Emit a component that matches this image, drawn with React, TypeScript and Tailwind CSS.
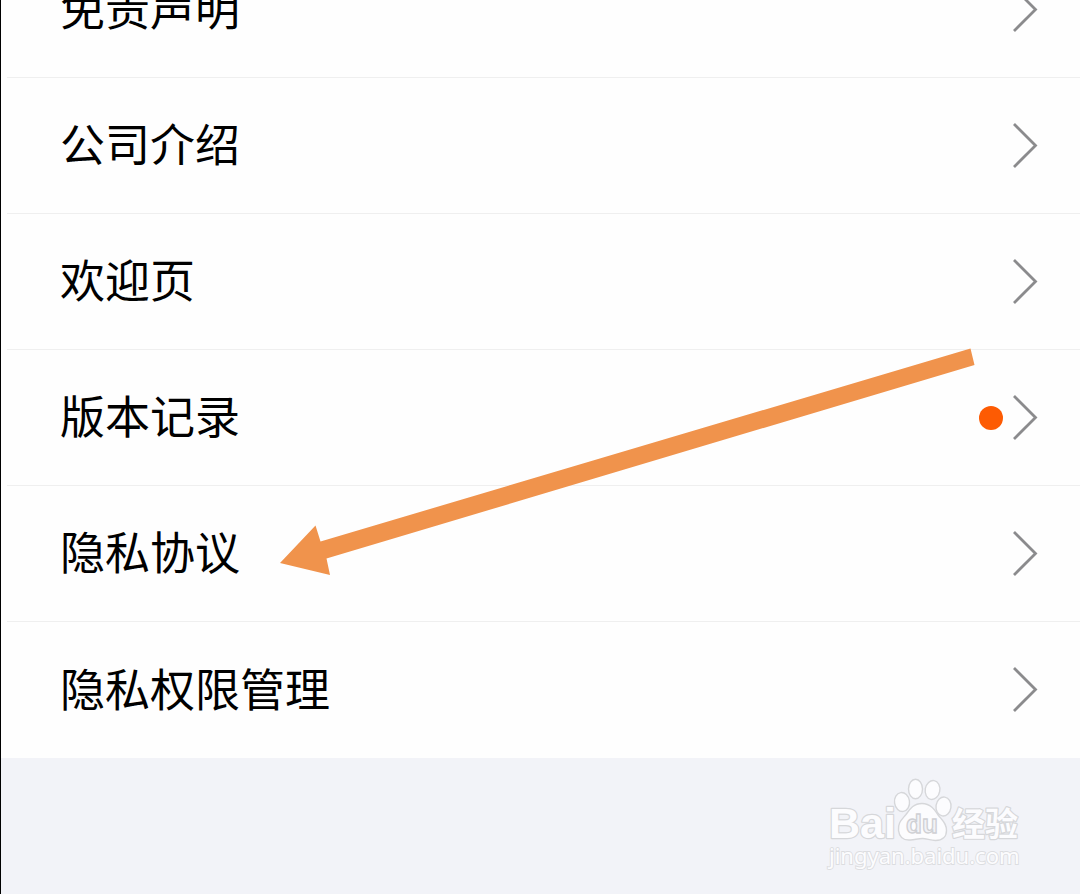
type Item = { label: string; unread?: boolean };

const items: Item[] = [
  { label: "免责声明" },
  { label: "公司介绍" },
  { label: "欢迎页" },
  { label: "版本记录", unread: true },
  { label: "隐私协议" },
  { label: "隐私权限管理" },
];

function Chevron() {
  return (
    <svg width="26" height="48" viewBox="0 0 26 48" fill="none" aria-hidden="true">
      <path d="M2 2 23.5 23.5 2 45" stroke="#8b8b8d" strokeWidth="2.8" />
    </svg>
  );
}

function Row({ label, unread }: Item) {
  return (
    <li className="ml-1.5 h-[136px] border-b border-[#efefef] last:border-b-0">
      <a href="#" className="flex h-full items-center justify-between pr-[42px] pl-[53px]">
        <span className="pb-[5px] text-[45px] leading-[60px] text-black">{label}</span>
        <span className="flex items-center gap-[9px]">
          {unread && <span className="size-6 rounded-full bg-[#fd5b03]" />}
          <Chevron />
        </span>
      </a>
    </li>
  );
}

function PointerArrow() {
  return (
    <svg
      className="pointer-events-none absolute top-[348px] left-[279px]"
      width="696"
      height="228"
      viewBox="280 348 696 228"
      aria-hidden="true"
    >
      <path d="M280 563 315.5 525.500 320.5 541.500 970.5 348.5 974.500 365 326.5 558.5 330 575Z" fill="#f0934c" />
    </svg>
  );
}

function Watermark() {
  return (
    <svg width="204" height="98" viewBox="824 774 204 98" role="img" aria-label="Baidu 经验">
      <g fill="#fcfcfe" stroke="#d6d7da" strokeWidth="1.4" strokeLinejoin="round">
        <ellipse cx="902" cy="802" rx="7.5" ry="9.5" transform="rotate(-8 902 802)" />
        <ellipse cx="915.5" cy="789" rx="7" ry="9.7" />
        <ellipse cx="932.5" cy="790" rx="7.3" ry="9.5" transform="rotate(10 932.5 790)" />
        <ellipse cx="943.5" cy="806.5" rx="7.5" ry="9.5" transform="rotate(8 943.5 806.5)" />
        <path d="M922 803.5c-8 0-12 5-16 11-5 6-8 8-7.500 16 1 8 6 10 12 9.500 5-.5 8-1.500 12-1.500s8 2 13 2c7 0 11-4 11-10 0-7-4-10-8-15-4-6-8-12-16.500-12Z" />
      </g>
      <g
        fill="#fcfcfe"
        stroke="#d6d7da"
        strokeWidth="2.4"
        strokeLinejoin="round"
        paintOrder="stroke"
        fontWeight="700"
      >
        <text x="829" y="838" fontSize="43" fontFamily="Liberation Sans, sans-serif">Bai</text>
        <text x="952" y="836" fontSize="33" fontFamily="Noto Sans CJK SC, sans-serif">经验</text>
      </g>
      <text x="906" y="833" fontSize="26" fontFamily="Liberation Sans, sans-serif" fontWeight="700" fill="#f1f2f7" stroke="#cfd0d4" strokeWidth="1.3">du</text>
      <text x="829" y="864" fontSize="22" fontFamily="Noto Sans, sans-serif" fill="#fcfcfe" stroke="#dcdde0" strokeWidth="1.8" paintOrder="stroke">jingyan.baidu.com</text>
    </svg>
  );
}

export default function App() {
  return (
    <main className="relative flex min-h-screen flex-col overflow-hidden border-l border-black bg-[#f2f3f8] font-['Noto_Sans_CJK_SC',sans-serif]">
      <ul className="-mt-[58px] bg-[#fefefe]">
        {items.map((item) => (
          <Row key={item.label} {...item} />
        ))}
      </ul>
      <footer className="mt-auto flex justify-end pr-[52px] pb-[22px]">
        <Watermark />
      </footer>
      <PointerArrow />
    </main>
  );
}
